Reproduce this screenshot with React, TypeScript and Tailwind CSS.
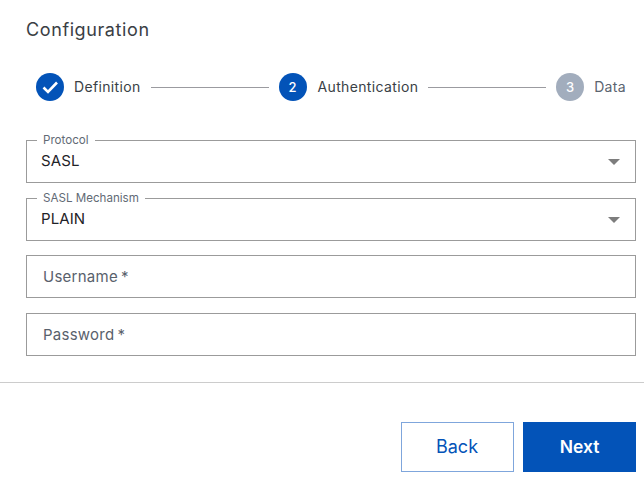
const font = { fontFamily: "Inter, sans-serif" };

function Step({ n, label, state }: { n: string; label: string; state: "done" | "active" | "todo" }) {
  return (
    <div className={state === "active" ? "flex items-center gap-[11px] shrink-0" : "flex items-center gap-[10px] shrink-0"}>
      <div
        className={
          state === "todo"
            ? "w-[28px] h-[28px] rounded-full bg-[#a2adbd] text-white flex items-center justify-center text-[13px] font-medium"
            : "w-[28px] h-[28px] rounded-full bg-[#0353b8] text-white flex items-center justify-center text-[13px] font-medium"
        }
      >
        {state === "done" ? (
          <svg width="18" height="18" viewBox="0 0 18 18" fill="none">
            <path d="M2.5 9.5 L7 14 L16 4.5" stroke="white" strokeWidth="2.6" />
          </svg>
        ) : (
          <span className="mt-[1px]">{n}</span>
        )}
      </div>
      <span className={state === "todo" ? "text-[14px] tracking-[0.35px] -mt-[2px] text-[#5b6470]" : "text-[14px] tracking-[0.35px] -mt-[2px] text-[#3a3f46]"}>
        {label}
      </span>
    </div>
  );
}

function SelectField({ label, value }: { label: string; value: string }) {
  return (
    <div className="relative h-[43px] border border-[#9b9b9b] flex items-center pl-[14px] pr-[15px]">
      <span className="absolute left-[10px] -top-[7px] bg-white px-[6px] text-[11.6px] leading-[13px] text-[#626a75]">{label}</span>
      <span className="flex-1 text-[15px] text-[#1f2328] tracking-[0.1px]">{value}</span>
      <svg width="12" height="6" viewBox="0 0 12 6" className="mt-[1px]">
        <path d="M0 0 H12 L6 6 Z" fill="#7d7d7d" />
      </svg>
    </div>
  );
}

function InputField({ label }: { label: string }) {
  return (
    <div className="h-[43px] border border-[#9b9b9b] flex items-center pl-[16px]">
      <span className="text-[15px] text-[#59616c] tracking-[0.25px] mt-[2px]">
        {label}
        <span className="ml-[3px]">*</span>
      </span>
    </div>
  );
}

export default function App() {
  return (
    <div className="w-[644px] h-[481px] bg-white overflow-hidden flex flex-col" style={font}>
      <div className="pl-[26px] pt-[18px] h-[73px]">
        <h1 className="text-[18px] leading-[24px] text-[#3a3e44] tracking-[0.6px]">Configuration</h1>
      </div>
      <div className="flex items-center pl-[36px] pr-[18px] h-[28px]">
        <Step n="1" label="Definition" state="done" />
        <div className="flex-1 h-px bg-[#9b9ba0] ml-[10px] mr-[10px]" />
        <Step n="2" label="Authentication" state="active" />
        <div className="flex-1 h-px bg-[#9b9ba0] mx-[10px]" />
        <Step n="3" label="Data" state="todo" />
      </div>
      <div className="mt-[39px] ml-[26px] w-[610px] flex flex-col gap-[14.6px]">
        <SelectField label="Protocol" value="SASL" />
        <SelectField label="SASL Mechanism" value="PLAIN" />
        <InputField label="Username" />
        <InputField label="Password" />
      </div>
      <div className="mt-[26px] h-px bg-[#cccccc]" />
      <div className="mt-[39px] pr-[8px] flex justify-end gap-[9px]">
        <button className="w-[113px] h-[50px] border border-[#7fa6dc] text-[#0353b8] text-[18px] pr-[1px]">Back</button>
        <button className="w-[113px] h-[50px] bg-[#0353b8] text-white text-[17.5px] font-semibold pt-[1px]">Next</button>
      </div>
    </div>
  );
}
